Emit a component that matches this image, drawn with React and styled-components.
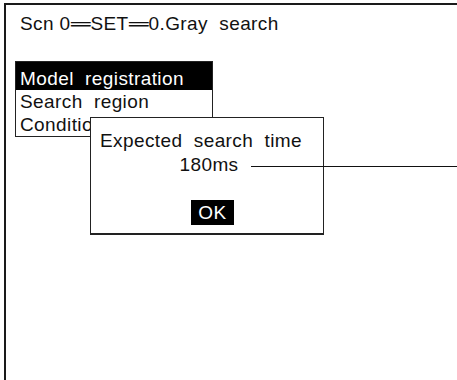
import React from "react";
import styled, { createGlobalStyle } from "styled-components";

const Global = createGlobalStyle`
  html, body { margin: 0; padding: 0; background: #fff; overflow: hidden; }
  body { font-family: "Liberation Sans", Arial, sans-serif; color: #111; }
`;

const Frame = styled.div`
  position: relative;
  box-sizing: border-box;
  margin: 3px 0 0 4px;
  width: 453px;
  height: 377px;
  overflow: hidden;
  border-top: 2px solid #1a1a1a;
  border-left: 2px solid #1a1a1a;
  padding: 7px 0 0 9px;
`;

const Title = styled.div`
  font-size: 19px;
  line-height: 23px;
  letter-spacing: 0.4px;
  padding-left: 5px;
  white-space: pre;
`;

const Wide = styled.span`
  display: inline-block;
  transform: scaleX(1.45);
  margin: 0 3px;
`;

const Menu = styled.div`
  margin-top: 26px;
  width: 196px;
  border: 1px solid #222;
`;

const MenuItem = styled.div`
  font-size: 19px;
  line-height: 23px;
  height: 23px;
  letter-spacing: 0.4px;
  padding: ${(p) => (p.$active ? "5px" : "0")} 0 0 4px;
  background: ${(p) => (p.$active ? "#000" : "#fff")};
  color: ${(p) => (p.$active ? "#fff" : "#111")};
  white-space: pre;
  overflow: hidden;
`;

const Dialog = styled.div`
  position: absolute;
  left: 84px;
  top: 112px;
  width: 234px;
  box-sizing: border-box;
  background: #fff;
  border: 1.5px solid #222;
  border-bottom-width: 2px;
  padding: 11px 0 8px 0;
  display: flex;
  flex-direction: column;
  font-size: 19px;
  line-height: 24px;
  letter-spacing: 0.4px;
`;

const DialogLine = styled.div`
  white-space: pre;
  text-align: ${(p) => p.$align || "left"};
  padding-left: ${(p) => p.$indent || 0}px;
`;

const OkButton = styled.div`
  align-self: center;
  margin: 23px 0 0 11px;
  background: #000;
  color: #fff;
  height: 25px;
  line-height: 25px;
  padding: 0 7px;
`;

const Leader = styled.div`
  position: absolute;
  left: 245px;
  top: 161px;
  width: 220px;
  height: 0;
  border-top: 1.5px solid #111;
`;

export default function App() {
  return (
    <>
      <Global />
      <Frame>
        <Title>
          Scn 0<Wide>═</Wide>SET<Wide>═</Wide>0.Gray  search
        </Title>
        <Menu>
          <MenuItem $active>Model  registration</MenuItem>
          <MenuItem>Search  region</MenuItem>
          <MenuItem>Condition</MenuItem>
        </Menu>
        <Dialog>
          <DialogLine $indent={9}>Expected  search  time</DialogLine>
          <DialogLine $align="center" $indent={4}>180ms</DialogLine>
          <OkButton>OK</OkButton>
        </Dialog>
        <Leader />
      </Frame>
    </>
  );
}
